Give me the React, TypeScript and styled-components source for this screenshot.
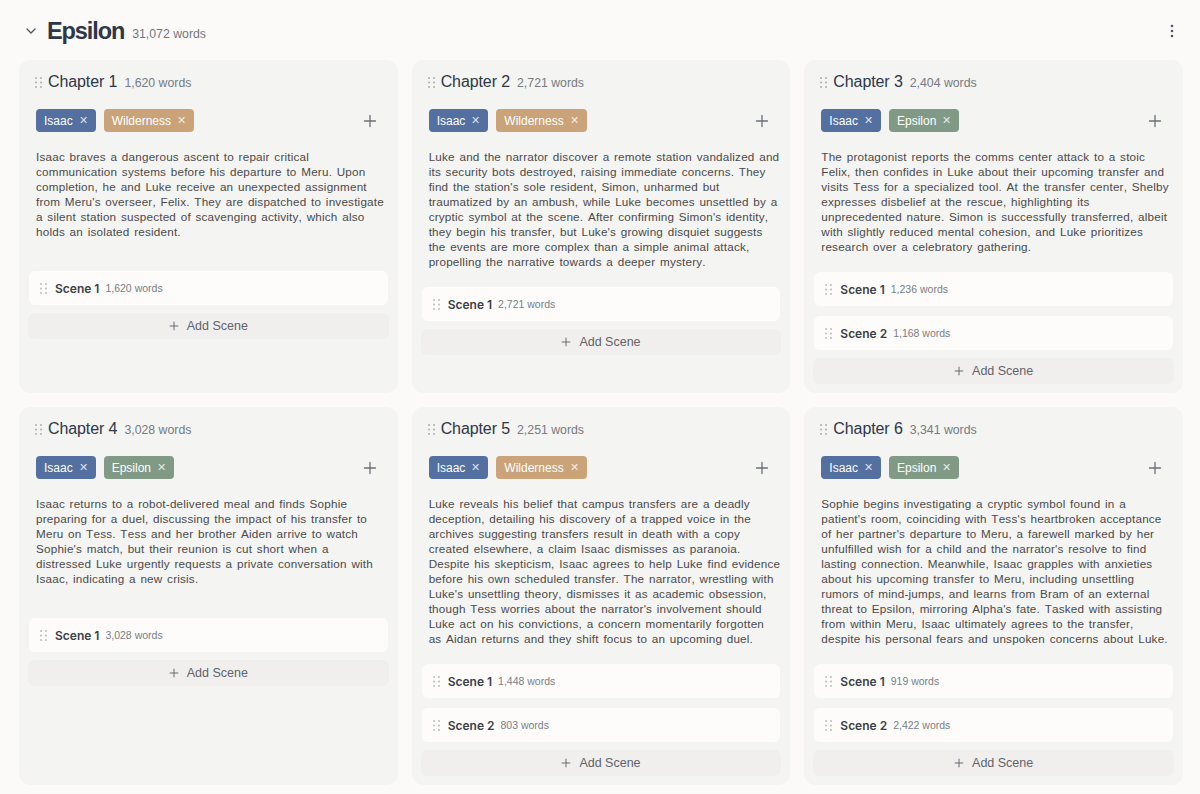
import React from "react";
import styled, { createGlobalStyle } from "styled-components";

const GlobalStyle = createGlobalStyle`
  html, body { margin: 0; padding: 0; background: #fbfaf9; }
  body { font-family: "Liberation Sans", Arial, sans-serif; -webkit-font-smoothing: antialiased; }
  * { box-sizing: border-box; }
`;

type Tag = "Isaac" | "Wilderness" | "Epsilon";
const tagColors: Record<Tag, string> = {
  Isaac: "#4e6c9f",
  Wilderness: "#c9a176",
  Epsilon: "#7e9883",
};

interface Scene { name: string; words: string; }
interface Chapter { title: string; words: string; tags: Tag[]; desc: string; scenes: Scene[]; }

const chapters: Chapter[] = [
  {
    title: "Chapter 1", words: "1,620 words", tags: ["Isaac", "Wilderness"],
    desc: "Isaac braves a dangerous ascent to repair critical communication systems before his departure to Meru. Upon completion, he and Luke receive an unexpected assignment from Meru's overseer, Felix. They are dispatched to investigate a silent station suspected of scavenging activity, which also holds an isolated resident.",
    scenes: [{ name: "Scene 1", words: "1,620 words" }],
  },
  {
    title: "Chapter 2", words: "2,721 words", tags: ["Isaac", "Wilderness"],
    desc: "Luke and the narrator discover a remote station vandalized and its security bots destroyed, raising immediate concerns. They find the station's sole resident, Simon, unharmed but traumatized by an ambush, while Luke becomes unsettled by a cryptic symbol at the scene. After confirming Simon's identity, they begin his transfer, but Luke's growing disquiet suggests the events are more complex than a simple animal attack, propelling the narrative towards a deeper mystery.",
    scenes: [{ name: "Scene 1", words: "2,721 words" }],
  },
  {
    title: "Chapter 3", words: "2,404 words", tags: ["Isaac", "Epsilon"],
    desc: "The protagonist reports the comms center attack to a stoic Felix, then confides in Luke about their upcoming transfer and visits Tess for a specialized tool. At the transfer center, Shelby expresses disbelief at the rescue, highlighting its unprecedented nature. Simon is successfully transferred, albeit with slightly reduced mental cohesion, and Luke prioritizes research over a celebratory gathering.",
    scenes: [{ name: "Scene 1", words: "1,236 words" }, { name: "Scene 2", words: "1,168 words" }],
  },
  {
    title: "Chapter 4", words: "3,028 words", tags: ["Isaac", "Epsilon"],
    desc: "Isaac returns to a robot-delivered meal and finds Sophie preparing for a duel, discussing the impact of his transfer to Meru on Tess. Tess and her brother Aiden arrive to watch Sophie's match, but their reunion is cut short when a distressed Luke urgently requests a private conversation with Isaac, indicating a new crisis.",
    scenes: [{ name: "Scene 1", words: "3,028 words" }],
  },
  {
    title: "Chapter 5", words: "2,251 words", tags: ["Isaac", "Wilderness"],
    desc: "Luke reveals his belief that campus transfers are a deadly deception, detailing his discovery of a trapped voice in the archives suggesting transfers result in death with a copy created elsewhere, a claim Isaac dismisses as paranoia. Despite his skepticism, Isaac agrees to help Luke find evidence before his own scheduled transfer. The narrator, wrestling with Luke's unsettling theory, dismisses it as academic obsession, though Tess worries about the narrator's involvement should Luke act on his convictions, a concern momentarily forgotten as Aidan returns and they shift focus to an upcoming duel.",
    scenes: [{ name: "Scene 1", words: "1,448 words" }, { name: "Scene 2", words: "803 words" }],
  },
  {
    title: "Chapter 6", words: "3,341 words", tags: ["Isaac", "Epsilon"],
    desc: "Sophie begins investigating a cryptic symbol found in a patient's room, coinciding with Tess's heartbroken acceptance of her partner's departure to Meru, a farewell marked by her unfulfilled wish for a child and the narrator's resolve to find lasting connection. Meanwhile, Isaac grapples with anxieties about his upcoming transfer to Meru, including unsettling rumors of mind-jumps, and learns from Bram of an external threat to Epsilon, mirroring Alpha's fate. Tasked with assisting from within Meru, Isaac ultimately agrees to the transfer, despite his personal fears and unspoken concerns about Luke.",
    scenes: [{ name: "Scene 1", words: "919 words" }, { name: "Scene 2", words: "2,422 words" }],
  },
];

const Page = styled.div`
  padding: 0 18px 12px 20px;
`;

const Header = styled.header`
  display: flex;
  align-items: center;
  height: 61px;
  padding-top: 1px;
`;

const Chevron = styled.button`
  display: flex;
  align-items: center;
  justify-content: center;
  width: 22px;
  height: 22px;
  margin-right: 5px;
  padding: 0;
  border: none;
  background: transparent;
  color: #4a5568;
`;

const Title = styled.h1`
  margin: 0;
  font-size: 23.5px;
  font-weight: 700;
  color: #2d3748;
  letter-spacing: -1.1px;
`;

const TitleCount = styled.span`
  margin-left: 8px;
  margin-top: 6px;
  font-size: 12.3px;
  color: #737880;
`;

const Kebab = styled.button`
  margin-left: auto;
  margin-right: 2px;
  display: flex;
  align-items: center;
  justify-content: center;
  width: 16px;
  height: 22px;
  padding: 0;
  border: none;
  background: transparent;
  color: #4a5568;
`;

const Grid = styled.div`
  display: grid;
  grid-template-columns: repeat(3, 1fr);
  gap: 16px;
`;

const Card = styled.section`
  display: flex;
  flex-direction: column;
  background: #f4f4f3;
  border-radius: 10px;
  padding: 9px;
  box-shadow: 0 0 0 1px rgba(0, 0, 0, 0.025);
`;

const CardHead = styled.div`
  display: flex;
  align-items: center;
  height: 22px;
  margin: 1px 6px 0;
`;

const ChapterName = styled.h2`
  margin: 0 0 0 6px;
  font-size: 16px;
  font-weight: 400;
  color: #2d3748;
  letter-spacing: -0.1px;
`;

const ChapterCount = styled.span`
  margin-left: 7px;
  margin-top: 2px;
  font-size: 12.3px;
  color: #767b82;
`;

const TagRow = styled.div`
  display: flex;
  align-items: center;
  gap: 8px;
  margin: 16px 6px 0 7px;
  height: 23px;
`;

const TagChip = styled.span<{ $bg: string }>`
  display: inline-flex;
  align-items: center;
  gap: 6px;
  height: 23px;
  padding: 0 8px;
  border-radius: 4px;
  background: ${(p) => p.$bg};
  color: #fff;
  font-size: 12px;
  opacity: 0.97;
`;

const TagX = styled.span`
  font-size: 11px;
  color: rgba(255, 255, 255, 0.8);
`;

const AddTag = styled.button`
  margin-left: auto;
  margin-right: 1px;
  width: 22px;
  height: 22px;
  display: flex;
  align-items: center;
  justify-content: center;
  padding: 0;
  border: none;
  background: transparent;
  color: #6b7078;
`;

const Desc = styled.p`
  margin: 17px -0.5px 0 7px;
  min-height: 104px;
  font-size: 11.7px;
  letter-spacing: 0.2px;
  word-spacing: 1.2px;
  font-kerning: none;
  line-height: 15px;
  color: #4a4a4a;
`;

const SceneList = styled.div`
  display: flex;
  flex-direction: column;
  gap: 10px;
  margin-top: 18px;
`;

const SceneRow = styled.div`
  display: flex;
  align-items: center;
  height: 34px;
  padding: 0 11px;
  background: #fdfcfb;
  border-radius: 6px;
`;

const SceneName = styled.span`
  margin-left: 8px;
  font-family: Inter, "Liberation Sans", sans-serif;
  font-size: 12px;
  font-weight: 600;
  color: #3b3f46;
`;

const SceneCount = styled.span`
  margin-left: 6px;
  font-size: 10.5px;
  color: #7a7e85;
`;

const AddScene = styled.button`
  display: flex;
  align-items: center;
  justify-content: center;
  gap: 8px;
  height: 24px;
  margin-top: 9px;
  border: none;
  border-radius: 5px;
  background: #f0efee;
  box-shadow: 0 0 0 1px rgba(0, 0, 0, 0.02);
  font-family: inherit;
  font-size: 12.5px;
  color: #5f636a;
`;

const Handle: React.FC<{ color?: string }> = ({ color = "#a3a6ab" }) => (
  <svg width="7" height="11" viewBox="0 0 7 11">
    {[1, 5.5, 10].map((y) =>
      [1, 6].map((x) => <circle key={`${x}-${y}`} cx={x} cy={y} r="0.9" fill={color} />)
    )}
  </svg>
);

const Plus: React.FC<{ size?: number }> = ({ size = 14 }) => (
  <svg width={size} height={size} viewBox="0 0 14 14" fill="none" stroke="currentColor" strokeWidth="1.3" strokeLinecap="round">
    <path d="M7 1.5v11M1.5 7h11" />
  </svg>
);

const ChapterCard: React.FC<{ c: Chapter }> = ({ c }) => (
  <Card>
    <CardHead>
      <Handle />
      <ChapterName>{c.title}</ChapterName>
      <ChapterCount>{c.words}</ChapterCount>
    </CardHead>
    <TagRow>
      {c.tags.map((t) => (
        <TagChip key={t} $bg={tagColors[t]}>
          {t}
          <TagX>✕</TagX>
        </TagChip>
      ))}
      <AddTag aria-label="Add tag">
        <Plus size={14} />
      </AddTag>
    </TagRow>
    <Desc>{c.desc}</Desc>
    <SceneList>
      {c.scenes.map((s) => (
        <SceneRow key={s.name}>
          <Handle color="#b4b6ba" />
          <SceneName>{s.name}</SceneName>
          <SceneCount>{s.words}</SceneCount>
        </SceneRow>
      ))}
    </SceneList>
    <AddScene>
      <Plus size={10} />
      Add Scene
    </AddScene>
  </Card>
);

export default function App() {
  return (
    <>
      <GlobalStyle />
      <Page>
        <Header>
          <Chevron aria-label="Collapse">
            <svg width="12" height="12" viewBox="0 0 12 12" fill="none" stroke="currentColor" strokeWidth="1.3" strokeLinecap="round" strokeLinejoin="round">
              <path d="M2 4l4 4 4-4" />
            </svg>
          </Chevron>
          <Title>Epsilon</Title>
          <TitleCount>31,072 words</TitleCount>
          <Kebab aria-label="More">
            <svg width="4" height="14" viewBox="0 0 4 14">
              <circle cx="2" cy="2" r="1.3" fill="currentColor" />
              <circle cx="2" cy="7" r="1.3" fill="currentColor" />
              <circle cx="2" cy="12" r="1.3" fill="currentColor" />
            </svg>
          </Kebab>
        </Header>
        <Grid>
          {chapters.map((c) => (
            <ChapterCard key={c.title} c={c} />
          ))}
        </Grid>
      </Page>
    </>
  );
}
